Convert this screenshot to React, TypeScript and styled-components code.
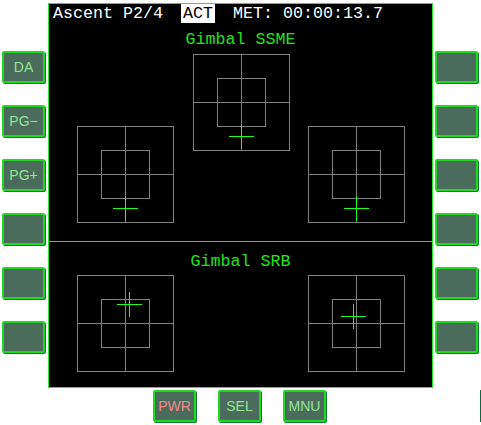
import styled, { createGlobalStyle } from 'styled-components';

const GlobalStyle = createGlobalStyle`
    html, body {
        margin: 0;
        padding: 0;
        background: #ffffff;
    }
`;

type CrossProps = { dx: number; dy: number };

// 계기 박스: 바깥 사각형 + 십자선 + 안쪽 사각형 + 초록 조준점
const GimbalBox = ({ dx, dy }: CrossProps) => {
    const cx = 48 + dx;
    const cy = 48 + dy;
    return (
        <BoxSvg width={97} height={97} viewBox="0 0 97 97" shapeRendering="crispEdges">
            <g fill="#808080">
                <rect x={0} y={0} width={97} height={1} />
                <rect x={0} y={96} width={97} height={1} />
                <rect x={0} y={0} width={1} height={97} />
                <rect x={96} y={0} width={1} height={97} />
                <rect x={24} y={24} width={49} height={1} />
                <rect x={24} y={72} width={49} height={1} />
                <rect x={24} y={24} width={1} height={49} />
                <rect x={72} y={24} width={1} height={49} />
                <rect x={48} y={0} width={1} height={97} />
                <rect x={0} y={48} width={97} height={1} />
            </g>
            <g fill="#1cff1c">
                <rect x={cx - 12} y={cy} width={25} height={1} />
                <rect x={cx} y={cy - 12} width={1} height={25} />
            </g>
        </BoxSvg>
    );
};

const leftKeys = ['DA', 'PG−', 'PG+', '', '', ''];
const rightKeys = ['', '', '', '', '', ''];
const bottomKeys = [
    { id: 'pwr', label: 'PWR', warn: true },
    { id: 'sel', label: 'SEL', warn: false },
    { id: 'mnu', label: 'MNU', warn: false },
];

const App = () => {
    return (
        <Page>
            <GlobalStyle />
            <TopRow>
                <KeyColumn>
                    {leftKeys.map((k, i) => (
                        <Key key={`l${i}`}>{k}</Key>
                    ))}
                </KeyColumn>
                <Screen>
                    <Header>
                        {'Ascent P2/4  '}
                        <Mode>ACT</Mode>
                        {'  MET: 00:00:13.7'}
                    </Header>
                    <Section>
                        <Title>Gimbal SSME</Title>
                        <BoxRow $gap={4}>
                            <SideSlot>
                                <GimbalBox dx={0} dy={34} />
                            </SideSlot>
                            <CenterSlot>
                                <GimbalBox dx={0} dy={34} />
                            </CenterSlot>
                            <SideSlot>
                                <GimbalBox dx={0} dy={34} />
                            </SideSlot>
                        </BoxRow>
                    </Section>
                    <LowerSection>
                        <Title>Gimbal SRB</Title>
                        <BoxRow $gap={3}>
                            <GimbalBox dx={4} dy={-19} />
                            <GimbalBox dx={-3} dy={-7} />
                        </BoxRow>
                    </LowerSection>
                </Screen>
                <KeyColumn>
                    {rightKeys.map((k, i) => (
                        <Key key={`r${i}`}>{k}</Key>
                    ))}
                </KeyColumn>
            </TopRow>
            <BottomRow>
                {bottomKeys.map((k) => (
                    <Key key={k.id} $warn={k.warn}>
                        {k.label}
                    </Key>
                ))}
                <EdgeMark />
            </BottomRow>
        </Page>
    );
};

export default App;

const Page = styled.div`
    width: 481px;
    height: 425px;
    display: flex;
    flex-direction: column;
    box-sizing: border-box;
    padding-top: 3px;
    overflow: hidden;
`;

const TopRow = styled.div`
    display: flex;
    flex-direction: row;
    align-items: flex-start;
    padding-left: 2px;
`;

const KeyColumn = styled.div`
    display: flex;
    flex-direction: column;
    gap: 22px;
    padding-top: 48px;
`;

const Key = styled.div<{ $warn?: boolean }>`
    width: 43px;
    height: 32px;
    box-sizing: border-box;
    border: 2px solid #22d822;
    border-radius: 2px;
    box-shadow: 1px 1px 0 #0e7a34;
    background-color: #4b6b5d;
    color: ${({ $warn }) => ($warn ? '#f38a8a' : '#92e692')};
    font-family: 'Liberation Sans', Arial, sans-serif;
    font-size: 14px;
    display: flex;
    align-items: center;
    justify-content: center;
    flex-shrink: 0;
`;

const Screen = styled.div`
    width: 385px;
    height: 385px;
    margin: 0 2px 0 3px;
    box-sizing: border-box;
    border: 1px solid #22ec22;
    background: #000000;
    display: flex;
    flex-direction: column;
    font-family: 'Liberation Mono', 'Courier New', monospace;
    font-size: 16.67px;
    line-height: 20px;
`;

const Header = styled.div`
    color: #ffffff;
    white-space: pre;
    padding-left: 4px;
    height: 20px;
`;

const Mode = styled.span`
    background: #ffffff;
    color: #000000;
    padding: 0 2px;
    margin: 0 -2px;
`;

const Section = styled.div`
    display: flex;
    flex-direction: column;
    padding-top: 6px;
    height: 217px;
    box-sizing: border-box;
`;

const LowerSection = styled(Section)`
    border-top: 1px solid #22e822;
    padding-top: 10px;
    flex: 1;
    height: auto;
`;

const Title = styled.div`
    color: #22e022;
    text-align: center;
    white-space: pre;
    height: 20px;
`;

const BoxRow = styled.div<{ $gap: number }>`
    display: flex;
    flex-direction: row;
    justify-content: space-between;
    align-items: flex-start;
    padding: ${({ $gap }) => $gap}px 27px 0 28px;
`;

const SideSlot = styled.div`
    padding-top: 72px;
`;

const CenterSlot = styled.div`
    margin: 0 18px 0 19px;
`;

const BoxSvg = styled.svg`
    display: block;
`;

const BottomRow = styled.div`
    display: flex;
    flex-direction: row;
    gap: 22px;
    padding-left: 153px;
    margin-top: 2px;
`;

const EdgeMark = styled.div`
    width: 1px;
    height: 32px;
    margin-left: auto;
    background: #0c6a3c;
`;
